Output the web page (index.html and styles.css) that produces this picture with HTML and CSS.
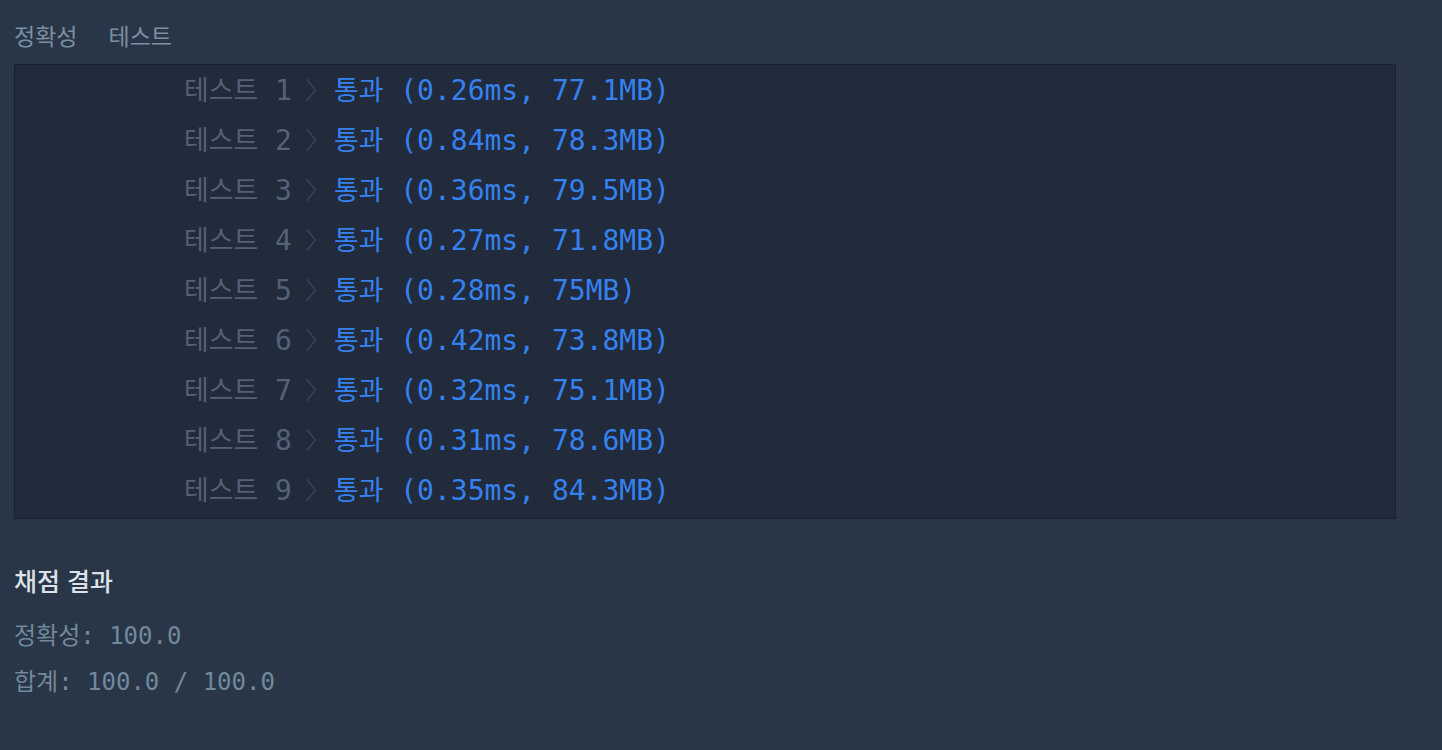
FILE: index.html
```html
<!DOCTYPE html>
<html lang="ko">
<head>
<meta charset="utf-8">
<title>채점 결과</title>
<link rel="stylesheet" href="styles.css">
</head>
<body>
<div class="page">
  <div class="tabs">
    <span class="tab">정확성</span>
    <span class="tab">테스트</span>
  </div>
  <div class="console">
    <div class="row"><span class="label"><span class="ko">테스트</span> 1</span><svg class="chev" viewBox="0 0 12 24"><path d="M1.5 1 L10.5 12 L1.5 23"/></svg><span class="result"><span class="ko">통과</span> (0.26ms, 77.1MB)</span></div>
    <div class="row"><span class="label"><span class="ko">테스트</span> 2</span><svg class="chev" viewBox="0 0 12 24"><path d="M1.5 1 L10.5 12 L1.5 23"/></svg><span class="result"><span class="ko">통과</span> (0.84ms, 78.3MB)</span></div>
    <div class="row"><span class="label"><span class="ko">테스트</span> 3</span><svg class="chev" viewBox="0 0 12 24"><path d="M1.5 1 L10.5 12 L1.5 23"/></svg><span class="result"><span class="ko">통과</span> (0.36ms, 79.5MB)</span></div>
    <div class="row"><span class="label"><span class="ko">테스트</span> 4</span><svg class="chev" viewBox="0 0 12 24"><path d="M1.5 1 L10.5 12 L1.5 23"/></svg><span class="result"><span class="ko">통과</span> (0.27ms, 71.8MB)</span></div>
    <div class="row"><span class="label"><span class="ko">테스트</span> 5</span><svg class="chev" viewBox="0 0 12 24"><path d="M1.5 1 L10.5 12 L1.5 23"/></svg><span class="result"><span class="ko">통과</span> (0.28ms, 75MB)</span></div>
    <div class="row"><span class="label"><span class="ko">테스트</span> 6</span><svg class="chev" viewBox="0 0 12 24"><path d="M1.5 1 L10.5 12 L1.5 23"/></svg><span class="result"><span class="ko">통과</span> (0.42ms, 73.8MB)</span></div>
    <div class="row"><span class="label"><span class="ko">테스트</span> 7</span><svg class="chev" viewBox="0 0 12 24"><path d="M1.5 1 L10.5 12 L1.5 23"/></svg><span class="result"><span class="ko">통과</span> (0.32ms, 75.1MB)</span></div>
    <div class="row"><span class="label"><span class="ko">테스트</span> 8</span><svg class="chev" viewBox="0 0 12 24"><path d="M1.5 1 L10.5 12 L1.5 23"/></svg><span class="result"><span class="ko">통과</span> (0.31ms, 78.6MB)</span></div>
    <div class="row"><span class="label"><span class="ko">테스트</span> 9</span><svg class="chev" viewBox="0 0 12 24"><path d="M1.5 1 L10.5 12 L1.5 23"/></svg><span class="result"><span class="ko">통과</span> (0.35ms, 84.3MB)</span></div>
  </div>
  <div class="summary">
    <div class="summary-title">채점 결과</div>
    <div class="summary-line"><span class="ko">정확성</span>: 100.0</div>
    <div class="summary-line"><span class="ko">합계</span>: 100.0 / 100.0</div>
  </div>
</div>
</body>
</html>
```

FILE: styles.css
```css
html, body {
  margin: 0;
  padding: 0;
  background: #283647;
}

body {
  width: 1442px;
  height: 750px;
  overflow: hidden;
}

.page {
  padding: 0 46px 0 14px;
  font-family: "DejaVu Sans Mono", "Noto Sans CJK KR", monospace;
}

.tabs {
  display: flex;
  gap: 31px;
  padding-top: 20px;
  height: 30px;
  margin-bottom: 14px;
}

.tab {
  font-family: "Noto Sans CJK KR", "Noto Sans", sans-serif;
  font-size: 23px;
  line-height: 30px;
  color: #7b8fa2;
}

.console {
  background: #212b3c;
  border: 1px solid #182130;
  padding: 0 0 2px 169px;
  height: 451px;
  box-sizing: content-box;
}

.row {
  display: flex;
  align-items: center;
  height: 50px;
  font-size: 28px;
  line-height: 50px;
  white-space: pre;
}

.ko {
  font-family: "Noto Sans CJK KR", sans-serif;
  font-size: 0.96em;
}

.summary .ko {
  font-size: 1em;
}

.label {
  color: #536276;
}

.chev {
  width: 12px;
  height: 24px;
  margin: 0 17px 0 13px;
  fill: none;
  stroke: #38465a;
  stroke-width: 1.3;
}

.result {
  color: #3581ef;
}

.summary {
  padding-top: 46px;
}

.summary-title {
  font-family: "Noto Sans CJK KR", sans-serif;
  font-size: 25px;
  font-weight: 500;
  line-height: 30px;
  color: #dce2e8;
  margin-bottom: 24px;
}

.summary-line {
  font-size: 24px;
  line-height: 30px;
  color: #72889b;
  white-space: pre;
  margin-bottom: 14px;
}
```
